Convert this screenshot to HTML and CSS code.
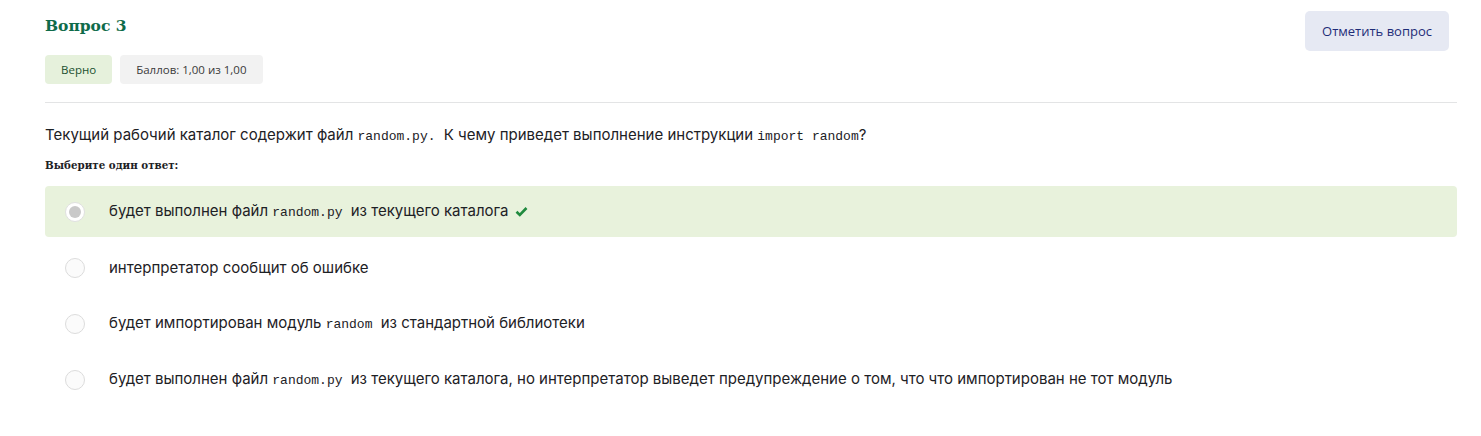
FILE: index.html
```html
<!DOCTYPE html>
<html lang="ru">
<head>
<meta charset="utf-8">
<title>Вопрос 3</title>
<link rel="stylesheet" href="styles.css">
</head>
<body>
<div class="que">
  <div class="info">
    <div class="info-left">
      <h3 class="qno">Вопрос 3</h3>
      <div class="badges">
        <span class="badge badge-ok">Верно</span>
        <span class="badge badge-grade">Баллов: 1,00 из 1,00</span>
      </div>
    </div>
    <button class="flag">Отметить вопрос</button>
  </div>
  <div class="content">
    <p class="qtext">Текущий рабочий каталог содержит файл <code class="gap">random.py.</code> К чему приведет выполнение инструкции <code>import random</code>?</p>
    <div class="prompt">Выберите один ответ:</div>
    <div class="answers">
      <div class="answer correct">
        <span class="radio checked"></span>
        <span class="label">будет выполнен файл <code class="gap">random.py</code> из текущего каталога
          <svg class="tick" width="13" height="11" viewBox="0 0 13 11"><path d="M1.5 5.8 L4.8 9 L11.5 2" fill="none" stroke="#1f8a3e" stroke-width="2.6"/></svg>
        </span>
      </div>
      <div class="answer">
        <span class="radio"></span>
        <span class="label">интерпретатор сообщит об ошибке</span>
      </div>
      <div class="answer">
        <span class="radio"></span>
        <span class="label">будет импортирован модуль <code class="gap">random</code> из стандартной библиотеки</span>
      </div>
      <div class="answer">
        <span class="radio"></span>
        <span class="label">будет выполнен файл <code class="gap">random.py</code> из текущего каталога, но интерпретатор выведет предупреждение о том, что что импортирован не тот модуль</span>
      </div>
    </div>
  </div>
</div>
</body>
</html>
```

FILE: styles.css
```css
* { box-sizing: border-box; }
body {
  margin: 0;
  background: #fff;
  font-family: Inter, Roboto, "Noto Sans", sans-serif;
  color: #1d2125;
}
.que {
  padding: 11px 24px 0 45px;
}
.info {
  display: flex;
  justify-content: space-between;
  align-items: flex-start;
  padding-bottom: 18px;
  border-bottom: 1px solid #e3e4e5;
}
.info-left {
  display: flex;
  flex-direction: column;
}
.qno {
  margin: 3px 0 0 0;
  font-family: "DejaVu Serif", "Liberation Serif", serif;
  font-weight: bold;
  font-size: 15.5px;
  line-height: 24px;
  color: #0f6b4a;
}
.badges {
  display: flex;
  gap: 8px;
  margin-top: 17px;
}
.badge {
  display: inline-flex;
  align-items: center;
  height: 29px;
  padding: 0 16px;
  border-radius: 4px;
  font-family: "Open Sans", sans-serif;
  font-size: 11.5px;
}
.badge-ok {
  background: #e6f1dc;
  color: #1b5030;
}
.badge-grade {
  background: #f2f2f2;
  color: #3a3a3a;
}
.flag {
  margin-right: 8px;
  width: 144px;
  height: 40px;
  border: none;
  border-radius: 5px;
  background: #e6e9f3;
  color: #1f2d78;
  font-family: "Open Sans", sans-serif;
  font-size: 13px;
  cursor: pointer;
}
.content {
  padding-top: 22px;
}
.qtext {
  margin: 0;
  font-size: 15px;
  line-height: 20px;
}
code {
  font-family: "Liberation Mono", "DejaVu Sans Mono", monospace;
  font-size: 13px;
}
code.gap {
  margin-right: 4px;
}
.prompt {
  margin-top: 10px;
  font-family: "DejaVu Serif", "Liberation Serif", serif;
  font-weight: bold;
  font-size: 10.3px;
  line-height: 16px;
}
.answers {
  margin-top: 13px;
  display: flex;
  flex-direction: column;
  gap: 5px;
}
.answer {
  display: flex;
  align-items: center;
  height: 51px;
  padding-left: 20px;
  border-radius: 4px;
}
.answer.correct {
  background: #e8f2dc;
}
.radio {
  width: 20px;
  height: 20px;
  border-radius: 50%;
  border: 1px solid #dcdcdc;
  background: #fbfbfb;
  flex: none;
  position: relative;
}
.radio.checked {
  border-color: #e0e0e0;
  background: #fff;
}
.radio.checked::after {
  content: "";
  position: absolute;
  left: 3px;
  top: 3px;
  width: 12px;
  height: 12px;
  border-radius: 50%;
  background: #c9c9c9;
}
.label {
  margin-left: 24px;
  font-size: 15px;
  line-height: 20px;
}
.tick {
  margin-left: 2px;
  vertical-align: -1px;
}
```
